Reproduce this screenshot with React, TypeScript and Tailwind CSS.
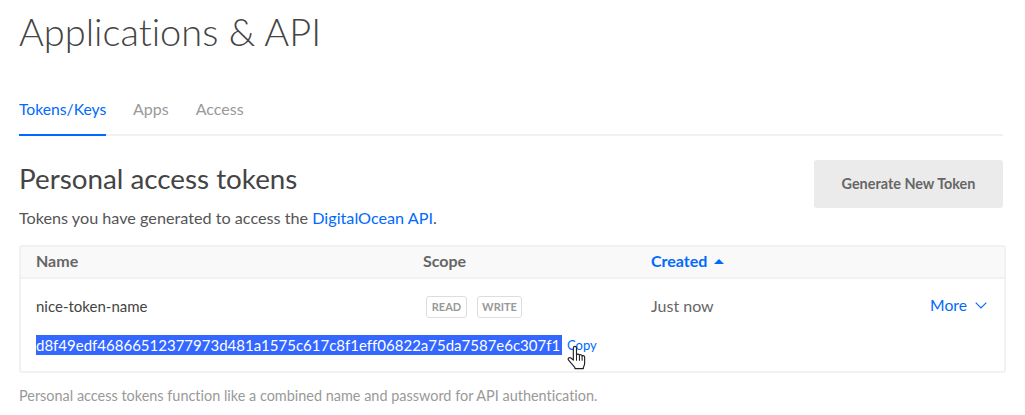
import React from 'react';

const font = { fontFamily: 'Lato, "Open Sans", sans-serif' };

function HandCursor() {
  return (
    <svg className="absolute left-[0px] top-[10px]" width="19" height="25" viewBox="0 0 18 23">
      <path
        d="M6 11V2.500c0-2 3-2 3 0V9c.3-1 2.600-1 2.800.5.400-1 2.400-.9 2.500.6.400-.8 2.200-.6 2.400 1V17c0 2-.8 2.600-1.200 4v1H7.500v-1C6 19 3.500 16.500 1.500 14c-1.200-1.600.8-3.200 2.200-2L6 14z"
        fill="#fff"
        stroke="#222"
        strokeWidth="1.100"
        strokeLinejoin="round"
      />
      <path d="M9 9v5.500M11.800 9.500v5M14.300 10v4.500" stroke="#222" strokeWidth="1" fill="none" />
    </svg>
  );
}

export default function App() {
  return (
    <div className="w-[1025px] h-[415px] overflow-hidden bg-white pl-[19px] text-[#444] [font-variant-ligatures:none]" style={font}>
      <h1 className="h-[70px] pt-[7px] text-[38px] leading-[48px] font-light text-[#444]">Applications &amp; API</h1>

      <div className="w-[984px] h-[66px] pt-[27px] flex gap-[27px] border-b-2 border-[#f1f1f1] text-[16px] leading-[24px]">
        <div className="w-[87px] h-[39px] whitespace-nowrap border-b-2 border-[#0069ff] text-[15.700px] text-[#0069ff]">Tokens/Keys</div>
        <div className="text-[#999]">Apps</div>
        <div className="text-[#999]">Access</div>
      </div>

      <div className="w-[984px] flex justify-between pt-[24px]">
        <div>
          <h2 className="text-[27.800px] leading-[38px] text-[#444]">Personal access tokens</h2>
          <p className="mt-[9px] text-[16.200px] leading-[22px] text-[#555]">
            Tokens you have generated to access the <span className="text-[#0069ff]">DigitalOcean API</span>.
          </p>
        </div>
        <button className="w-[189px] h-[48px] pb-[1px] rounded-[3px] bg-[#ebebeb] text-[14.400px] font-bold text-[#666]">
          Generate New Token
        </button>
      </div>

      <div className="mt-[16px] w-[987px] h-[128px] rounded-[3px] border-2 border-[#f1f1f1]">
        <div className="h-[32px] flex items-center pl-[15px] pb-[2px] bg-[#f9f9f9] border-b-2 border-[#f1f1f1] text-[16px] font-bold text-[#666]">
          <div className="w-[387px]">Name</div>
          <div className="w-[228px]">Scope</div>
          <div className="flex items-center gap-[7px] text-[#0069ff]">
            Created
            <span className="w-0 h-0 border-x-[5px] border-x-transparent border-b-[5px] border-b-[#0069ff]" />
          </div>
        </div>
        <div className="h-[53px] flex items-center pl-[15px] pr-[17px] pt-[1px] text-[15px] text-[#444]">
          <div className="w-[387px]">nice-token-name</div>
          <div className="w-[228px] flex gap-[10px] pl-[3px] pt-[2px]">
            <span className="h-[22px] w-[41px] flex items-center justify-center rounded-[3px] border border-[#ddd] text-[11px] font-bold text-[#999]">READ</span>
            <span className="h-[22px] w-[45px] flex items-center justify-center rounded-[3px] border border-[#ddd] text-[11px] font-bold text-[#999]">WRITE</span>
          </div>
          <div className="text-[16px] text-[#666]">Just now</div>
          <div className="ml-auto flex items-center gap-[8px] text-[#0069ff] text-[15.700px]">
            More
            <svg width="12" height="7" viewBox="0 0 12 7" fill="none" stroke="#0069ff" strokeWidth="1.100">
              <path d="M.7.7 6 6l5.300-5.300" />
            </svg>
          </div>
        </div>
        <div className="pl-[15px] pt-[3px] flex items-center text-[15px]">
          <span className="w-[526px] h-[20px] leading-[20px] whitespace-nowrap bg-[#3367ff] text-white">d8f49edf46866512377973d481a1575c617c8f1eff06822a75da7587e6c307f1</span>
          <span className="relative ml-[5px] pt-[1px] text-[13px] text-[#0069ff]">
            Copy
            <HandCursor />
          </span>
        </div>
      </div>

      <p className="mt-[13px] text-[14.450px] leading-[20px] text-[#999]">
        Personal access tokens function like a combined name and password for API authentication.
      </p>
    </div>
  );
}
